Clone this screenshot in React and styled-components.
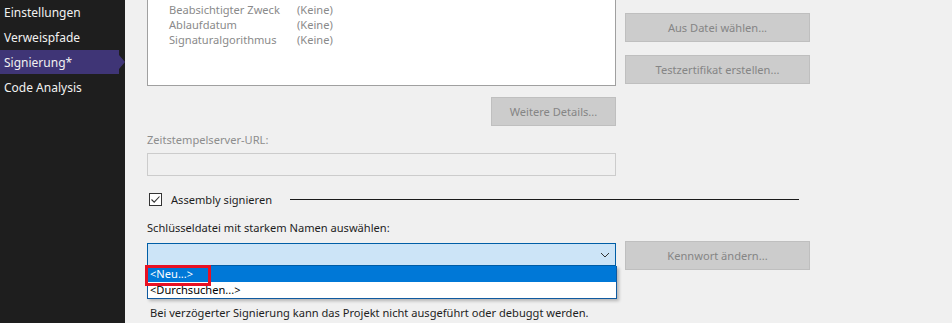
import React from "react";
import styled, { createGlobalStyle } from "styled-components";

const GlobalStyle = createGlobalStyle`
  html, body {
    margin: 0;
    padding: 0;
    height: 100%;
    overflow: hidden;
    background: #f0f0f0;
  }
  body {
    font-family: "Noto Sans", "Open Sans", sans-serif;
    font-size: 11.1px;
  }
`;

const navItems = ["Einstellungen", "Verweispfade", "Signierung*", "Code Analysis"];

const certRows = [
  ["Beabsichtigter Zweck", "(Keine)"],
  ["Ablaufdatum", "(Keine)"],
  ["Signaturalgorithmus", "(Keine)"],
];

export default function App() {
  return (
    <>
      <GlobalStyle />
      <Page>
        <Sidebar>
          {navItems.map((item) => (
            <NavItem key={item} $active={item === "Signierung*"}>
              {item}
            </NavItem>
          ))}
        </Sidebar>

        <Main>
          <Form>
            <CertBox>
              {certRows.map(([label, value]) => (
                <CertRow key={label}>
                  <CertLabel>{label}</CertLabel>
                  <span>{value}</span>
                </CertRow>
              ))}
            </CertBox>

            <ButtonStack>
              {/* button above the visible area; only its bottom edge shows */}
              <Button disabled aria-label="Aus Speicher wählen..." />
              <Button disabled>Aus Datei wählen...</Button>
              <Button disabled>Testzertifikat erstellen...</Button>
            </ButtonStack>

            <DetailsRow>
              <Button disabled $width="125px">
                Weitere Details...
              </Button>
            </DetailsRow>

            <Label $muted>Zeitstempelserver-URL:</Label>
            <UrlInput disabled />

            <CheckRow>
              <CheckBox>
                <svg width="11" height="11" viewBox="0 0 11 11">
                  <path d="M1.5 5.5 L4.2 8.2 L9.5 2.5" fill="none" stroke="#333" strokeWidth="1.1" />
                </svg>
              </CheckBox>
              <span>Assembly signieren</span>
              <Rule />
            </CheckRow>

            <Label>Schlüsseldatei mit starkem Namen auswählen:</Label>

            <ComboWrap>
              <Combo>
                <svg width="10" height="6" viewBox="0 0 10 6">
                  <path d="M1 1 L5 5 L9 1" fill="none" stroke="#333" strokeWidth="1" />
                </svg>
              </Combo>
              <ComboList>
                <ComboItem $selected>&lt;Neu...&gt;</ComboItem>
                <ComboItem>&lt;Durchsuchen...&gt;</ComboItem>
              </ComboList>
              <Highlight />
            </ComboWrap>
            <PasswordButton disabled>Kennwort ändern...</PasswordButton>

            <Note>Bei verzögerter Signierung kann das Projekt nicht ausgeführt oder debuggt werden.</Note>
          </Form>
        </Main>
      </Page>
    </>
  );
}

const Page = styled.div`
  display: flex;
  height: 323px;
  overflow: hidden;
`;

const Sidebar = styled.nav`
  width: 125px;
  flex-shrink: 0;
  background: #1e1e1e;
  display: flex;
  flex-direction: column;
  font-size: 12px;
`;

const NavItem = styled.div`
  position: relative;
  height: 24px;
  margin-bottom: 1px;
  width: 119px;
  padding-left: 4px;
  box-sizing: border-box;
  display: flex;
  align-items: center;
  color: #f1f1f1;
  background: ${(p) => (p.$active ? "#3f3576" : "transparent")};

  &::after {
    content: "";
    display: ${(p) => (p.$active ? "block" : "none")};
    position: absolute;
    left: 119px;
    top: 5px;
    border-top: 7px solid transparent;
    border-bottom: 7px solid transparent;
    border-left: 6px solid #3f3576;
  }
`;

const Main = styled.main`
  flex: 1;
  background: #f0f0f0;
  padding-left: 22px;
  overflow: hidden;
`;

const Form = styled.div`
  display: grid;
  grid-template-columns: 469px 185px;
  column-gap: 9px;
  align-items: start;
  margin-top: -40px;
  color: #1e1e1e;
`;

const CertBox = styled.div`
  height: 126px;
  box-sizing: border-box;
  border: 1px solid #a0a0a0;
  background: #fff;
  padding: 41px 0 0 21px;
  color: #8a8a8a;
`;

const CertRow = styled.div`
  display: flex;
  height: 15px;
  line-height: 15px;
`;

const CertLabel = styled.span`
  width: 128px;
  flex-shrink: 0;
`;

const ButtonStack = styled.div`
  display: flex;
  flex-direction: column;
  gap: 13px;
  margin-top: 11px;
`;

const Button = styled.button`
  width: ${(p) => p.$width || "185px"};
  height: 29px;
  box-sizing: border-box;
  border: 1px solid #bfbfbf;
  background: #cccccc;
  color: #858585;
  font: inherit;
  padding: 0;
`;

const DetailsRow = styled.div`
  grid-column: 1;
  display: flex;
  justify-content: flex-end;
  margin-top: 11px;
`;

const Label = styled.div`
  grid-column: 1 / span 2;
  height: 16px;
  line-height: 16px;
  margin-top: ${(p) => (p.$muted ? "6px" : "13px")};
  color: ${(p) => (p.$muted ? "#8d8d8d" : "#1e1e1e")};
`;

const UrlInput = styled.input`
  grid-column: 1;
  height: 23px;
  box-sizing: border-box;
  margin: 5px 0 0;
  border: 1px solid #cccccc;
  background: #f0f0f0;
`;

const CheckRow = styled.div`
  grid-column: 1 / span 2;
  display: flex;
  align-items: center;
  height: 16px;
  margin-top: 15px;
  margin-right: 11px;
  padding-left: 2px;
`;

const CheckBox = styled.span`
  width: 13px;
  height: 13px;
  box-sizing: border-box;
  border: 1px solid #333;
  background: #fff;
  display: flex;
  align-items: center;
  justify-content: center;
  margin-right: 9px;
`;

const Rule = styled.div`
  flex: 1;
  height: 1px;
  background: #1a1a1a;
  margin-left: 18px;
`;

const ComboWrap = styled.div`
  grid-column: 1;
  position: relative;
  margin-top: 7px;
`;

const Combo = styled.div`
  height: 23px;
  box-sizing: border-box;
  border: 1px solid #005ea6;
  background: #cce4f7;
  display: flex;
  align-items: center;
  justify-content: flex-end;
  padding-right: 5px;
`;

const ComboList = styled.div`
  position: absolute;
  top: 23px;
  left: 0;
  width: 470px;
  box-sizing: border-box;
  border: 1px solid #0f5aa0;
  border-top: none;
  background: #fff;
  box-shadow: 2px 2px 3px rgba(0, 0, 0, 0.25);
  z-index: 2;
`;

const ComboItem = styled.div`
  height: 16px;
  line-height: 16px;
  padding-left: 2px;
  background: ${(p) => (p.$selected ? "#0078d7" : "#fff")};
  color: ${(p) => (p.$selected ? "#fff" : "#000")};
`;

const Highlight = styled.div`
  position: absolute;
  left: -2px;
  top: 22px;
  width: 66px;
  height: 21px;
  box-sizing: border-box;
  border: 3px solid #e81123;
  z-index: 3;
`;

const PasswordButton = styled(Button)`
  grid-column: 2;
  margin-top: 5px;
`;

const Note = styled.div`
  grid-column: 1 / span 2;
  margin-top: 35px;
  padding-left: 3px;
  line-height: 16px;
`;
